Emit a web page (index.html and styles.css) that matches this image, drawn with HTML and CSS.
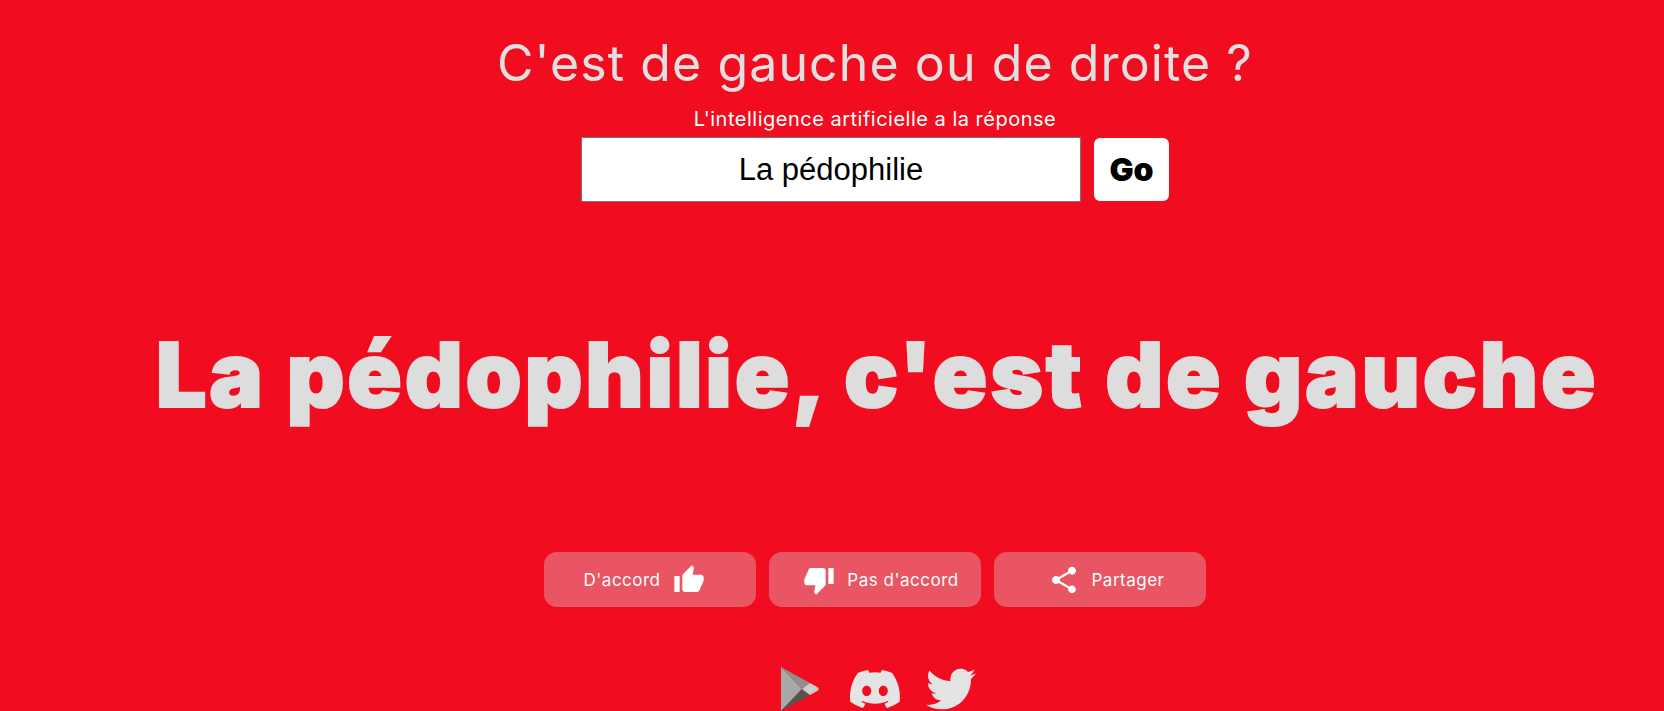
FILE: index.html
```html
<!DOCTYPE html>
<html lang="fr">
<head>
<meta charset="utf-8">
<title>C'est de gauche ou de droite ?</title>
<link rel="stylesheet" href="styles.css">
</head>
<body>
<main class="page">
  <h1 class="title">C'est de gauche ou de droite ?</h1>
  <p class="subtitle">L'intelligence artificielle a la réponse</p>
  <form class="search">
    <input class="search-input" type="text" value="La pédophilie">
    <button class="go" type="button">Go</button>
  </form>
  <h2 class="verdict">La pédophilie, c'est de gauche</h2>
  <div class="actions">
    <button class="action" type="button"><span>D'accord</span>
      <svg class="action-icon" viewBox="0 0 24 24"><path d="M1 21h4V9H1v12zm22-11c0-1.100-.9-2-2-2h-6.310l.95-4.570.03-.32c0-.41-.17-.79-.44-1.060L14.170 1 7.590 7.590C7.220 7.950 7 8.450 7 9v10c0 1.100.9 2 2 2h9c.83 0 1.540-.5 1.840-1.220l3.020-7.050c.09-.23.140-.47.140-.73v-2z"/></svg>
    </button>
    <button class="action" type="button">
      <svg class="action-icon" viewBox="0 0 24 24"><path d="M15 3H6c-.83 0-1.540.5-1.840 1.220l-3.020 7.050c-.09.23-.14.47-.14.730v2c0 1.100.9 2 2 2h6.310l-.95 4.570-.03.32c0 .41.170.79.440 1.060L9.830 23l6.590-6.590c.36-.36.580-.86.580-1.410V5c0-1.100-.9-2-2-2zm4 0v12h4V3h-4z"/></svg>
      <span>Pas d'accord</span>
    </button>
    <button class="action" type="button">
      <svg class="action-icon" viewBox="0 0 24 24"><path d="M18 16.080c-.76 0-1.440.3-1.960.77L8.910 12.700c.05-.23.090-.46.090-.7s-.04-.47-.09-.7l7.050-4.110c.54.5 1.250.81 2.040.81 1.660 0 3-1.340 3-3s-1.340-3-3-3-3 1.340-3 3c0 .24.040.47.090.7L8.040 9.810C7.500 9.310 6.790 9 6 9c-1.660 0-3 1.340-3 3s1.340 3 3 3c.79 0 1.500-.31 2.040-.81l7.120 4.160c-.05.21-.08.43-.08.65 0 1.610 1.310 2.920 2.920 2.920s2.920-1.310 2.920-2.920-1.310-2.920-2.920-2.920z"/></svg>
      <span>Partager</span>
    </button>
  </div>
  <nav class="social">
    <svg class="play" viewBox="0 0 40 46" aria-label="Google Play">
      <path fill="#a8a8a8" d="M1 0 L22 22 L1 44 Z"/>
      <path fill="#8f8f8f" d="M1 0 L30 16 L22 22 Z"/>
      <path fill="#545454" d="M1 44 L30 28 L22 22 Z"/>
      <path fill="#cdcdcd" d="M30 16 L38 20.500 Q39.500 22 38 23.500 L30 28 L22 22 Z"/>
    </svg>
    <svg class="discord" viewBox="0 0 24 24" aria-label="Discord"><path d="M20.320 4.370a19.800 19.800 0 0 0-4.890-1.520.07.07 0 0 0-.08.040c-.21.380-.44.870-.61 1.250a18.300 18.300 0 0 0-5.490 0 12.600 12.600 0 0 0-.62-1.250.08.08 0 0 0-.08-.04 19.700 19.700 0 0 0-4.880 1.520.07.07 0 0 0-.03.030C.530 9.050-.320 13.580.100 18.060c0 .02.010.04.030.06a19.900 19.900 0 0 0 5.990 3.030.08.08 0 0 0 .08-.03c.46-.63.870-1.290 1.230-1.990a.08.08 0 0 0-.04-.11 13.100 13.100 0 0 1-1.870-.89.08.08 0 0 1-.01-.13c.13-.09.250-.19.370-.29a.07.07 0 0 1 .08-.01c3.930 1.790 8.180 1.790 12.060 0a.07.07 0 0 1 .08.01c.12.100.25.200.37.290a.08.08 0 0 1-.01.13c-.6.350-1.220.640-1.870.890a.08.08 0 0 0-.04.110c.360.700.770 1.360 1.220 1.990a.08.08 0 0 0 .08.030 19.800 19.800 0 0 0 6-3.030.08.08 0 0 0 .03-.060c.5-5.180-.84-9.670-3.550-13.660a.06.06 0 0 0-.03-.03zM8.020 15.330c-1.180 0-2.160-1.090-2.160-2.420s.96-2.420 2.160-2.420c1.210 0 2.180 1.100 2.160 2.420 0 1.330-.96 2.420-2.160 2.420zm7.970 0c-1.180 0-2.160-1.090-2.160-2.420s.96-2.420 2.160-2.420c1.210 0 2.180 1.100 2.160 2.420 0 1.330-.95 2.420-2.160 2.420z"/></svg>
    <svg class="twitter" viewBox="0 0 24 24" aria-label="Twitter"><path d="M23.950 4.570a10 10 0 0 1-2.820.77 4.960 4.960 0 0 0 2.160-2.720c-.95.550-2.010.96-3.130 1.190a4.920 4.920 0 0 0-8.380 4.480C7.690 8.090 4.070 6.130 1.640 3.160a4.820 4.820 0 0 0-.67 2.480c0 1.710.87 3.210 2.190 4.100a4.900 4.900 0 0 1-2.230-.62v.06a4.920 4.920 0 0 0 3.950 4.830 5 5 0 0 1-2.210.08 4.940 4.940 0 0 0 4.600 3.420A9.870 9.870 0 0 1 1.170 19.620c-.39 0-.78-.02-1.170-.07a14 14 0 0 0 7.560 2.210c9.050 0 14-7.500 14-13.980 0-.21 0-.42-.02-.63a9.940 9.940 0 0 0 2.460-2.550z"/></svg>
  </nav>
</main>
</body>
</html>
```

FILE: styles.css
```css
* { box-sizing: border-box; }
html, body { margin: 0; height: 100%; overflow: hidden; }
body { background: #f20c20; font-family: "Inter", "Liberation Sans", sans-serif; }
.page { margin-left: 86px; display: flex; flex-direction: column; align-items: center; }
.title { margin: 33px 0 0; font-size: 50px; line-height: 60px; font-weight: 400; letter-spacing: 1.1px; color: #e0e0e0; }
.subtitle { margin: 14px 0 0; font-size: 20px; line-height: 24px; letter-spacing: .5px; color: #fff; height: 24px; }
.search { display: flex; align-items: center; gap: 13px; margin-top: 6px; }
.search-input { width: 500px; height: 65px; border: 1px solid #767676; background: #fff; text-align: center; font: 31px "Liberation Sans", sans-serif; color: #000; padding: 0; }
.go { width: 75px; height: 63px; border: 0; border-radius: 6px; background: #fff; color: #000; font: 900 32px "Inter", sans-serif; padding: 0; }
.verdict { margin: 105px 0 0; padding-left: 4px; font-size: 90px; line-height: 135px; font-weight: 900; letter-spacing: 2.75px; -webkit-text-stroke: 2px #dddddd; color: #dddddd; white-space: nowrap; }
.actions { display: flex; gap: 13px; margin-top: 110px; }
.action { width: 212px; height: 55px; border: 0; border-radius: 13px; background: #ea5563; color: #fff; font: 400 17px "Inter", sans-serif; letter-spacing: .5px; display: flex; align-items: center; justify-content: center; padding: 0; }
.action-icon { width: 32px; height: 32px; margin: 0 12px; fill: #fff; }
.social { display: flex; align-items: flex-start; margin-top: 57px; padding-left: 6px; }
.play { width: 40px; height: 46px; margin-top: 3px; margin-right: 30px; }
.discord, .twitter { width: 50px; height: 50px; fill: #e4e4e4; }
.discord { margin-right: 26px; }
```
